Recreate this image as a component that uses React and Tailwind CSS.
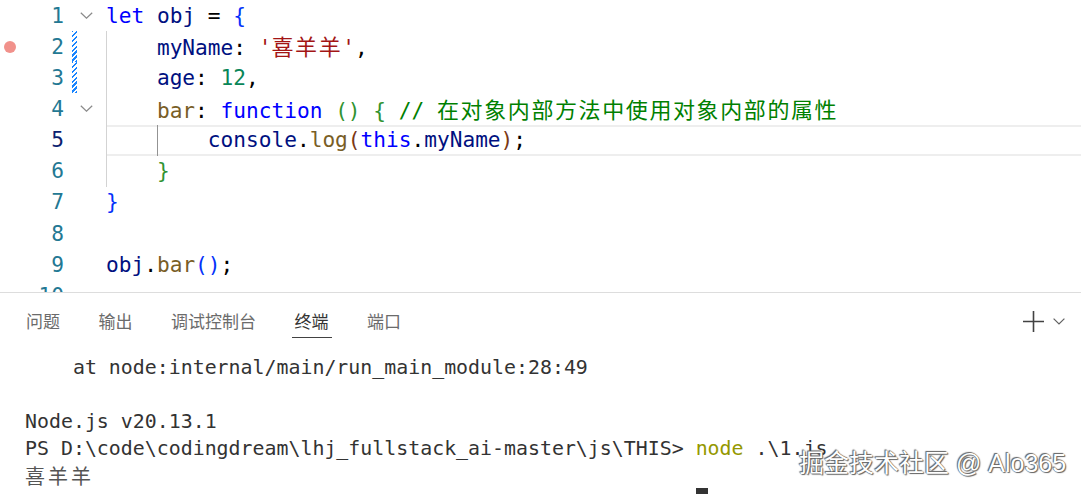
import React from 'react';

const C = {
  kw: 'text-[#0000ff]',
  v: 'text-[#001080]',
  fn: 'text-[#795e26]',
  str: 'text-[#a31515]',
  num: 'text-[#098658]',
  cmt: 'text-[#008000]',
  b1: 'text-[#0431fa]',
  b2: 'text-[#319331]',
  b3: 'text-[#7b3814]',
  p: 'text-[#000000]',
};

// CJK glyphs inside the mono editor font take roughly two columns
const Cjk = ({ children }) => (
  <span className="font-['Noto_Sans_CJK_SC',sans-serif] text-[22px] tracking-[1.6px]">{children}</span>
);

const lines = [
  { n: 1, fold: true, tokens: [['let', 'kw'], [' '], ['obj', 'v'], [' = '], ['{', 'b1']] },
  { n: 2, indent: 1, bp: true, mod: true, tokens: [['myName', 'v'], [': '], ["'", 'str'], [<Cjk key="c">喜羊羊</Cjk>, 'str'], ["'", 'str'], [',']] },
  { n: 3, indent: 1, mod: true, tokens: [['age', 'v'], [': '], ['12', 'num'], [',']] },
  {
    n: 4, indent: 1, fold: true,
    tokens: [['bar', 'fn'], [': '], ['function', 'kw'], [' '], ['()', 'b2'], [' '], ['{', 'b2'], [' '], ['// ', 'cmt'], [<Cjk key="c">在对象内部方法中使用对象内部的属性</Cjk>, 'cmt']],
  },
  { n: 5, indent: 2, active: true, tokens: [['console', 'v'], ['.'], ['log', 'fn'], ['(', 'b3'], ['this', 'kw'], ['.'], ['myName', 'v'], [')', 'b3'], [';']] },
  { n: 6, indent: 1, tokens: [['}', 'b2']] },
  { n: 7, tokens: [['}', 'b1']] },
  { n: 8, tokens: [] },
  { n: 9, tokens: [['obj', 'v'], ['.'], ['bar', 'fn'], ['()', 'b1'], [';']] },
  { n: 10, tokens: [] },
];

const Chevron = ({ className = '' }) => (
  <svg width="13" height="7" viewBox="0 0 13 7" className={className}>
    <path d="M0.8 0.8 L6.5 6.2 L12.2 0.8" fill="none" stroke="#8a8a8a" strokeWidth="1.2" />
  </svg>
);

const EditorLine = ({ line }) => (
  <div className="flex h-[31.125px]">
    {/* gutter */}
    <div className="flex w-[106px] shrink-0 items-center">
      <div className="flex w-[20px] justify-center">
        {line.bp && <div className="h-[12px] w-[12px] rounded-full bg-[#f1918b]" />}
      </div>
      <div className={`w-[44px] text-right ${line.active ? 'text-[#0b216f]' : 'text-[#237893]'}`}>{line.n}</div>
      <div className="w-[8px]" />
      <div
        className={`h-full w-[5px] ${line.mod ? 'bg-[repeating-linear-gradient(-45deg,#1a85ff_0px,#1a85ff_1.5px,transparent_1.5px,transparent_3.5px)]' : ''}`}
      />
      <div className="flex w-[19px] justify-center">{line.fold && <Chevron />}</div>
    </div>
    {/* code */}
    <div
      className={`flex flex-1 items-center whitespace-pre ${line.active ? 'shadow-[inset_0_2px_0_#eeeeee,inset_0_-2px_0_#eeeeee]' : ''}`}
    >
      {Array.from({ length: line.indent || 0 }).map((_, i) => (
        <span
          key={i}
          className={`flex h-full w-[4ch] shrink-0 border-l ${line.active && i === 1 ? 'border-[#939393]' : 'border-[#d3d3d3]'}`}
        />
      ))}
      <span>
        {line.tokens.map(([t, c], i) => (
          <span key={i} className={C[c || 'p']}>{t}</span>
        ))}
      </span>
    </div>
  </div>
);

const tabs = ['问题', '输出', '调试控制台', '终端', '端口'];

export default function App() {
  return (
    <div className="relative h-[494px] w-[1081px] overflow-hidden bg-white">
      {/* Editor */}
      <div className="h-[293px] overflow-hidden border-b border-[#dddddd] font-['DejaVu_Sans_Mono',monospace] text-[21.15px]">
        {lines.map((l) => (
          <EditorLine key={l.n} line={l} />
        ))}
      </div>

      {/* Panel tabs */}
      <div className="flex h-[56px] items-center pl-[26px] pr-[16px] font-['Noto_Sans_CJK_SC',sans-serif] text-[17px]">
        <div className="flex gap-[38.5px]">
          {tabs.map((t) => (
            <span key={t} className={`relative leading-[24px] ${t === '终端' ? 'text-[#333333]' : 'text-[#6b6b6b]'}`}>
              {t}
              {t === '终端' && <span className="absolute -left-[3px] -right-[3px] top-[28px] h-[1.3px] bg-[#424242]" />}
            </span>
          ))}
        </div>
        <div className="ml-auto flex items-center gap-[9px]">
          <svg width="21" height="21" viewBox="0 0 21 21">
            <path d="M10.5 0 V21 M0 10.5 H21" stroke="#424242" strokeWidth="1.6" />
          </svg>
          <svg width="12" height="7" viewBox="0 0 12 7">
            <path d="M0.6 0.6 L6 6 L11.4 0.6" fill="none" stroke="#616161" strokeWidth="1.2" />
          </svg>
        </div>
      </div>

      {/* Terminal */}
      <div className="pl-[25px] pt-[5px] font-['DejaVu_Sans_Mono',monospace] text-[19.9px] leading-[27px] text-[#333333] whitespace-pre">
        <div>{'    at node:internal/main/run_main_module:28:49'}</div>
        <div>{' '}</div>
        <div>Node.js v20.13.1</div>
        <div>
          {'PS D:\\code\\codingdream\\lhj_fullstack_ai-master\\js\\THIS> '}
          <span className="text-[#949800]">node</span>
          {' .\\1.js'}
        </div>
        <div className="font-['Noto_Sans_CJK_SC',sans-serif] text-[20px] tracking-[3px] text-[#555555]">喜羊羊</div>
        <div className="flex">
          <span>{' '.repeat(56)}</span>
          <span className="mt-[-1px] h-[27px] w-[12px] bg-[#333333]" />
        </div>
      </div>

      {/* watermark */}
      <div className="absolute left-[799px] top-[451px] font-['Liberation_Sans','Noto_Sans_CJK_SC',sans-serif] text-[25px] leading-none text-white [text-shadow:0_0_1px_#444,1px_1px_1px_#666,-1px_-1px_1px_#666]">
        掘金技术社区 @ Alo365
      </div>
    </div>
  );
}
